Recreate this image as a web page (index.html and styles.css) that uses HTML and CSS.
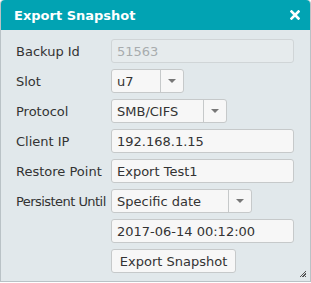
FILE: index.html
```html
<!DOCTYPE html>
<html lang="en">
<head>
    <meta charset="UTF-8">
    <title>Export Snapshot</title>
    <link rel="stylesheet" href="styles.css">
</head>
<body>

<div class="dialog">
    <div class="titlebar">
        <span class="title">Export Snapshot</span>
        <svg class="close" width="10" height="10" viewBox="0 0 10 10">
            <path d="M1.5 1.5 L8.5 8.5 M8.5 1.5 L1.5 8.5" stroke="white" stroke-width="2.6" stroke-linecap="square"/>
        </svg>
    </div>

    <!-- Export form -->
    <form class="form">
        <div class="row">
            <label>Backup Id</label>
            <div class="field wide disabled">51563</div>
        </div>
        <div class="row">
            <label>Slot</label>
            <div class="select slot"><span class="value">u7</span><span class="arrow"></span></div>
        </div>
        <div class="row">
            <label>Protocol</label>
            <div class="select protocol"><span class="value">SMB/CIFS</span><span class="arrow"></span></div>
        </div>
        <div class="row">
            <label>Client IP</label>
            <div class="field wide">192.168.1.15</div>
        </div>
        <div class="row">
            <label>Restore Point</label>
            <div class="field wide">Export Test1</div>
        </div>
        <div class="row">
            <label class="long">Persistent Until</label>
            <div class="select until"><span class="value">Specific date</span><span class="arrow"></span></div>
        </div>
        <div class="row">
            <label></label>
            <div class="field wide">2017-06-14 00:12:00</div>
        </div>
        <div class="row">
            <label></label>
            <button type="button">Export Snapshot</button>
        </div>
    </form>

    <div class="grip"></div>
</div>

</body>
</html>
```

FILE: styles.css
```css
body {
    margin: 0;
    font-family: 'DejaVu Sans', Verdana, sans-serif;
    font-size: 13px;
    color: #333;
}

.dialog {
    position: relative;
    width: 309px;
    height: 281px;
    background-color: #e1e8eb;
    border: 1px solid #b9c2c6;
    border-top: none;
    border-radius: 4px 4px 0 0;
}

.titlebar {
    height: 30px;
    background-color: #01a3b3;
    border-radius: 4px 4px 0 0;
    color: white;
    display: flex;
    align-items: center;
    justify-content: space-between;
    padding: 0 10px 0 13px;
}

.title {
    font-weight: bold;
    font-size: 13px;
}

.close {
    display: block;
}

.form {
    display: flex;
    flex-direction: column;
    gap: 6px;
    padding: 9px 0 0 15px;
}

.row {
    display: flex;
    align-items: center;
}

label {
    width: 95px;
    flex-shrink: 0;
    white-space: nowrap;
}

label.long {
    letter-spacing: -0.55px;
}

.field,
.select,
button {
    box-sizing: border-box;
    height: 24px;
    border: 1px solid #c6c9ca;
    border-radius: 3px;
    background-color: #f7f7f7;
    display: flex;
    align-items: center;
    padding: 0 5px;
    color: #333;
}

.wide {
    width: 183px;
}

.disabled {
    background-color: #e6ebed;
    color: #a8acae;
    border-color: #d0d5d7;
}

.select {
    padding: 0;
}

.select .value {
    flex: 1;
    padding: 0 5px;
    border-right: 1px solid #c6c9ca;
    height: 100%;
    display: flex;
    align-items: center;
}

.select .arrow {
    width: 22px;
    display: flex;
    justify-content: center;
}

.select .arrow::after {
    content: "";
    border-left: 4px solid transparent;
    border-right: 4px solid transparent;
    border-top: 4px solid #777;
}

.slot {
    width: 73px;
}

.protocol {
    width: 116px;
}

.until {
    width: 141px;
}

button {
    width: 125px;
    justify-content: center;
    font-family: inherit;
    font-size: 13px;
    cursor: pointer;
}

.grip {
    position: absolute;
    right: 4px;
    bottom: 4px;
    width: 7px;
    height: 7px;
    background: repeating-linear-gradient(135deg, transparent 0 1px, #555 1px 2px);
    clip-path: polygon(100% 0, 100% 100%, 0 100%);
}
```
